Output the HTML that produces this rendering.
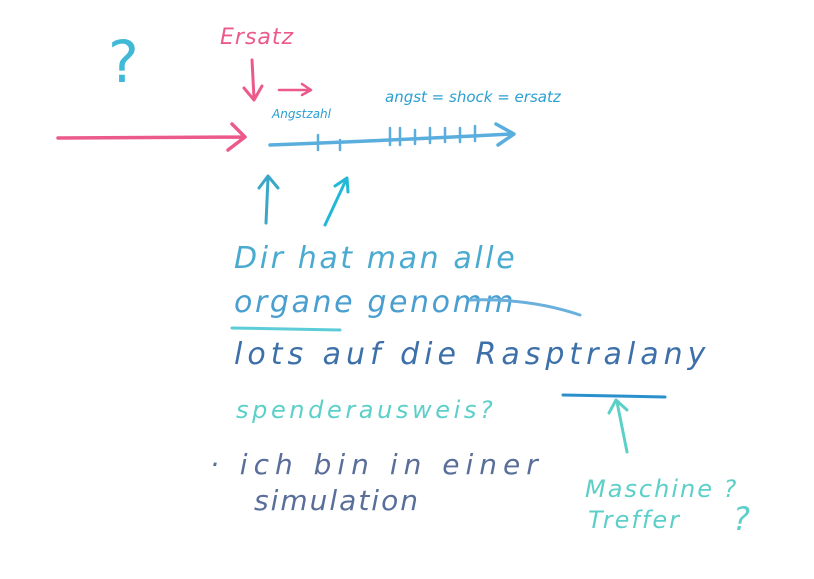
<!DOCTYPE html>
<html><head><meta charset="utf-8"><style>
html,body{margin:0;padding:0;background:#fff;width:814px;height:579px;overflow:hidden}
svg text{font-family:"DejaVu Sans","Liberation Sans",sans-serif}
</style></head><body>
<svg width="814" height="579" viewBox="0 0 814 579" xmlns="http://www.w3.org/2000/svg" fill="none" stroke-linecap="round" stroke-linejoin="round">
<text x="108" y="82" font-size="58" fill="#3fb9d6" font-family="DejaVu Sans">?</text>
<text x="220" y="44" font-size="22" fill="#ec5a8c" font-style="italic" letter-spacing="1">Ersatz</text>
<path d="M252 60 L254 98 M244 88 L254 100 L262 86" stroke="#ec5a8c" stroke-width="3"/>
<path d="M279 90 L310 90 M302 84 L311 90 L302 95" stroke="#ec5a8c" stroke-width="2.5"/>
<text x="272" y="118" font-size="12" fill="#2a9fd0" font-style="italic">Angstzahl</text>
<text x="385" y="102" font-size="15" fill="#2a9fd0" font-style="italic">angst = shock = ersatz</text>
<path d="M58 138 L244 137 M232 124 L245 137 L228 150" stroke="#ec5a8c" stroke-width="3.5"/>
<path d="M270 145 Q400 140 512 134 M496 124 L514 134 L498 145" stroke="#5aaede" stroke-width="3.5"/>
<path d="M318 135 L318 150 M340 140 L340 150 M390 128 L390 145 M400 128 L400 145 M415 130 L415 144 M430 128 L430 143 M445 128 L445 142 M460 128 L460 142 M475 126 L475 141" stroke="#5aaede" stroke-width="2.5"/>
<path d="M266 223 L268 178 M259 188 L268 176 L278 188" stroke="#3aa7c8" stroke-width="3"/>
<path d="M325 225 L346 180 M335 186 L347 178 L348 192" stroke="#22b8d8" stroke-width="3"/>
<text x="234" y="268" font-size="30" fill="#4aaad0" font-style="italic" letter-spacing="2.6">Dir hat man alle</text>
<text x="234" y="312" font-size="30" fill="#4a9fd0" font-style="italic" letter-spacing="2.6">organe genomm</text>
<path d="M470 300 Q530 298 580 315" stroke="#6ab0dc" stroke-width="3"/>
<path d="M232 328 L340 330" stroke="#5ccdd8" stroke-width="3"/>
<text x="234" y="364" font-size="30" fill="#3d6fa8" font-style="italic" letter-spacing="5">lots auf  die Rasptralany</text>
<path d="M563 395 L665 397" stroke="#2a90cc" stroke-width="3"/>
<text x="236" y="418" font-size="24" fill="#5cd0c8" font-style="italic" letter-spacing="3.6">spenderausweis?</text>
<path d="M627 452 L617 402 M609 413 L616 400 L627 410" stroke="#5cd0c8" stroke-width="3"/>
<text x="210" y="474" font-size="28" fill="#5a6e9a" font-style="italic" letter-spacing="6">· ich bin in einer</text>
<text x="254" y="510" font-size="28" fill="#5a6e9a" font-style="italic" letter-spacing="2">simulation</text>
<text x="585" y="497" font-size="24" fill="#5cd0c8" font-style="italic" letter-spacing="2">Maschine ?</text>
<text x="588" y="528" font-size="24" fill="#5cd0c8" font-style="italic" letter-spacing="2">Treffer</text>
<text x="733" y="530" font-size="32" fill="#5cd0c8" font-style="italic">?</text>
</svg>
</body></html>
